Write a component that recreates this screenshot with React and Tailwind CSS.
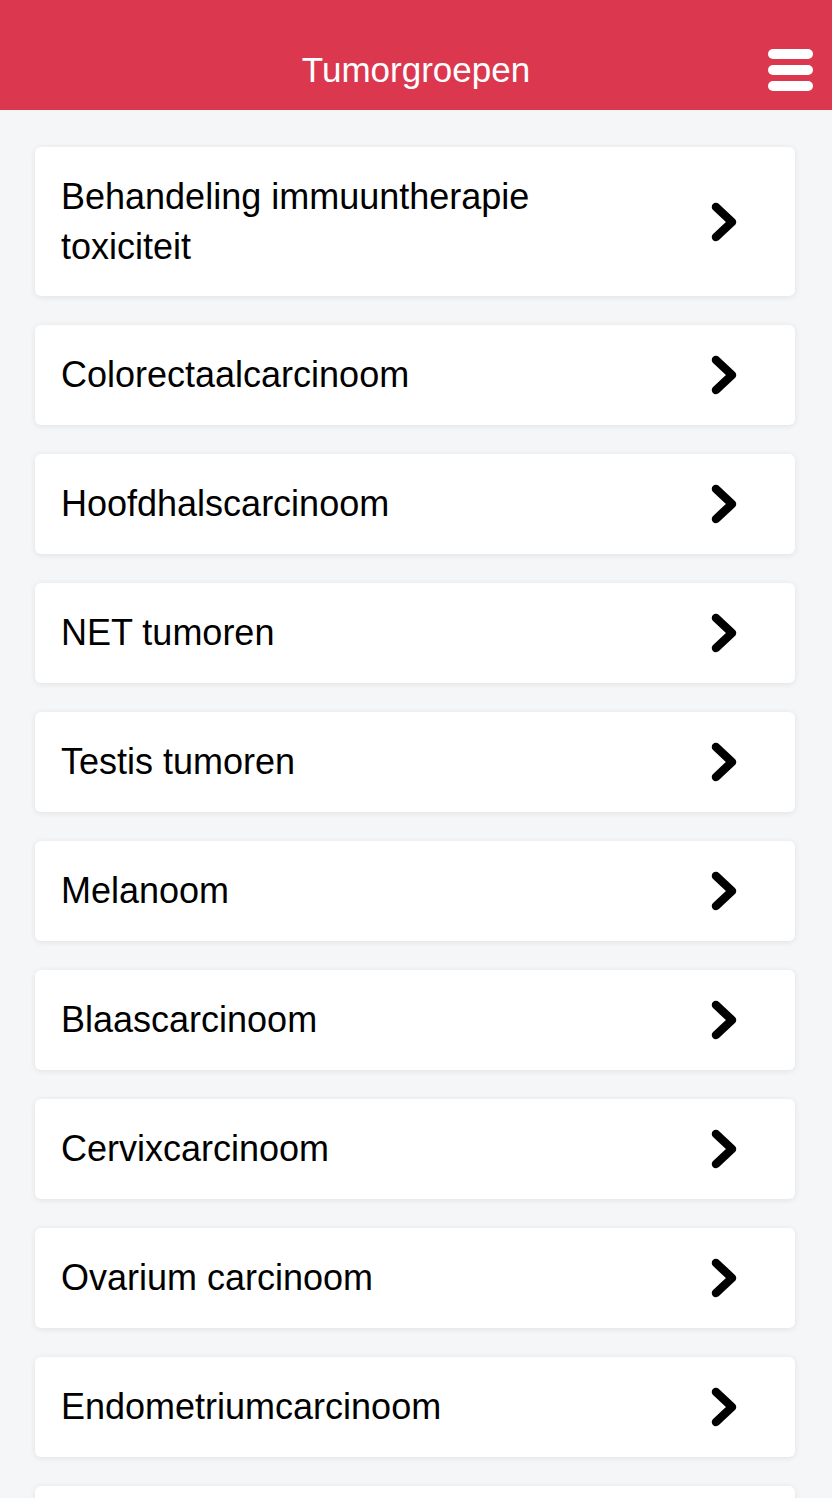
const groups = [
  "Behandeling immuuntherapie toxiciteit",
  "Colorectaalcarcinoom",
  "Hoofdhalscarcinoom",
  "NET tumoren",
  "Testis tumoren",
  "Melanoom",
  "Blaascarcinoom",
  "Cervixcarcinoom",
  "Ovarium carcinoom",
  "Endometriumcarcinoom",
];

function Chevron() {
  return (
    <svg width="27" height="40" viewBox="0 0 27 40" className="shrink-0" aria-hidden="true">
      <polyline
        points="5,5 21,20 5,35"
        fill="none"
        stroke="#000"
        strokeWidth="8.5"
        strokeLinecap="round"
        strokeLinejoin="round"
      />
    </svg>
  );
}

function MenuIcon() {
  return (
    <button type="button" aria-label="Menu" className="flex w-[45px] flex-col gap-[6px]">
      <span className="h-[10px] w-full rounded-full bg-white" />
      <span className="h-[10px] w-full rounded-full bg-white" />
      <span className="h-[10px] w-full rounded-full bg-white" />
    </button>
  );
}

const cardClass =
  "flex items-center justify-between rounded-[6px] bg-white pl-[26px] pr-[57px] shadow-[0_1px_6px_rgba(0,0,0,0.09)]";

export default function App() {
  return (
    <div
      className="min-h-[1498px] bg-[#f5f6f7]"
      style={{ fontFamily: '"Liberation Sans", Arial, sans-serif' }}
    >
      <header className="relative flex h-[110px] items-center justify-center bg-[#db3850]">
        <h1 className="pt-[28px] text-[35px] leading-none text-white">Tumorgroepen</h1>
        <div className="absolute right-[19px] top-[49px]">
          <MenuIcon />
        </div>
      </header>

      <ul className="flex flex-col gap-[29px] pb-8 pl-[35px] pr-[37px] pt-[37px]">
        {groups.map((name, i) => (
          <li key={name} className={`${cardClass} ${i === 0 ? "py-[24.5px]" : "py-[25px]"}`}>
            <span className="max-w-[520px] text-[36px] leading-[50px] text-black">{name}</span>
            <Chevron />
          </li>
        ))}
        {/* next card, cut off by the bottom of the screen */}
        <li className={`${cardClass} h-[100px]`} aria-hidden="true" />
      </ul>
    </div>
  );
}
